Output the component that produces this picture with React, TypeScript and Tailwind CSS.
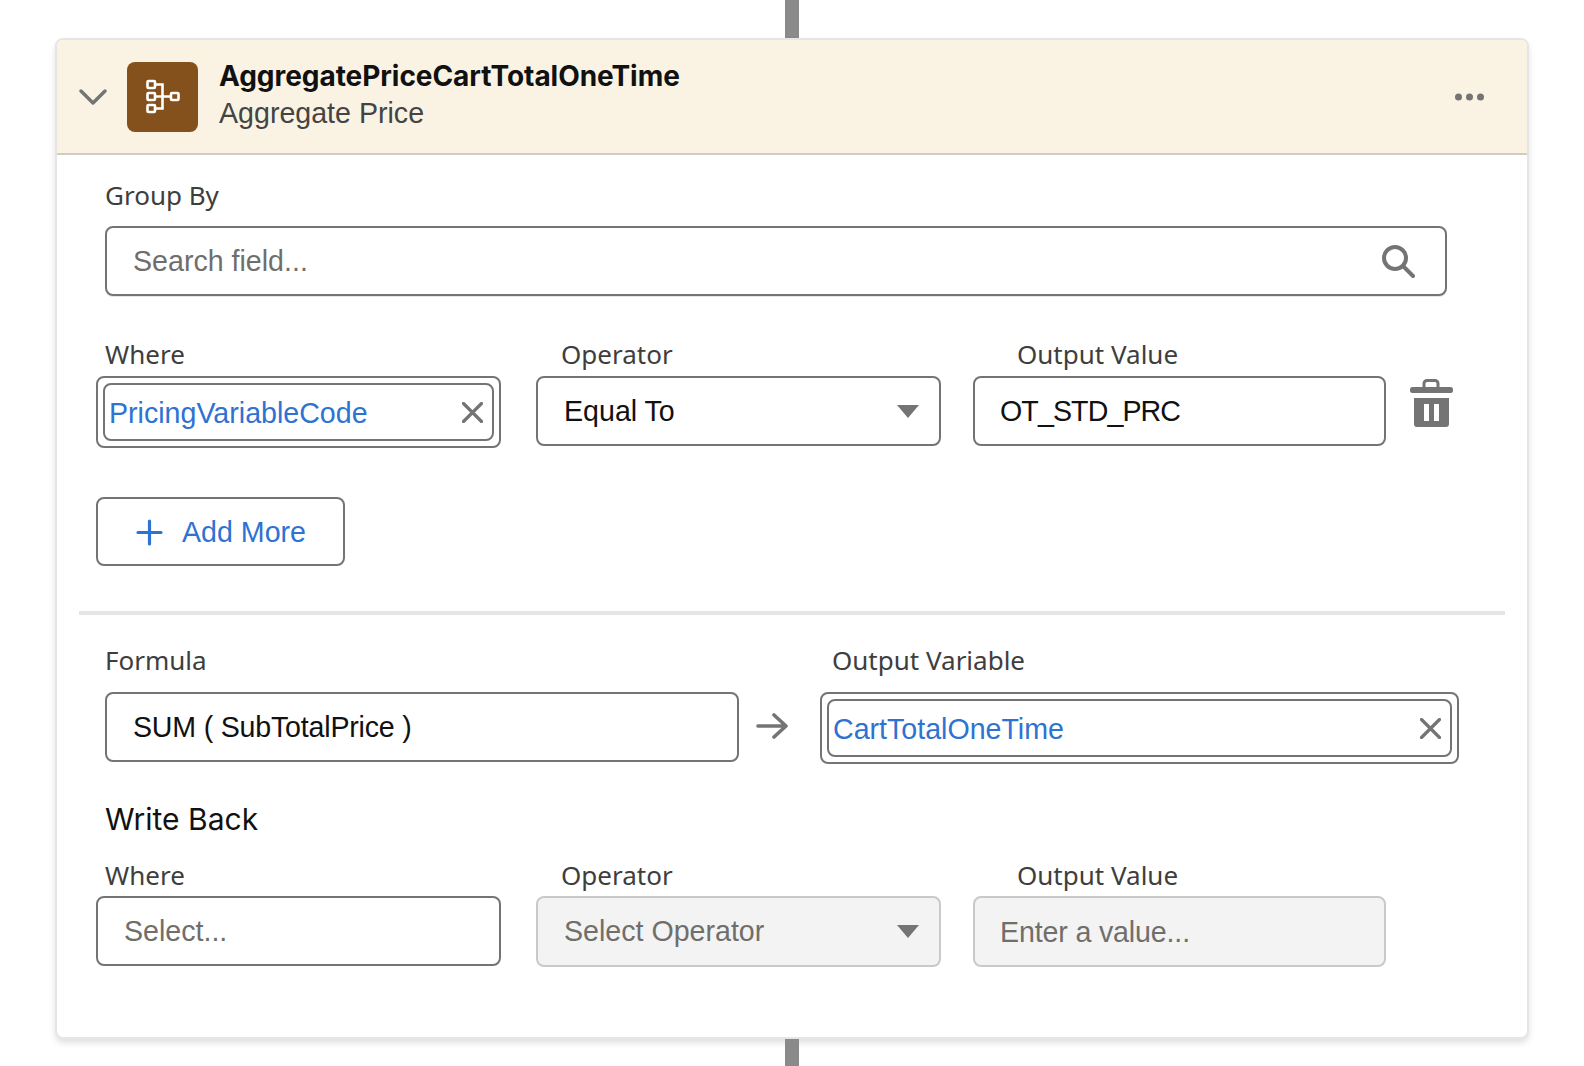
import type { ReactNode } from 'react';

const VALUE_FONT = "font-['Liberation_Sans',Arial,sans-serif] text-[28.6px]";
const FIELD_BASE = `flex h-[70px] items-center rounded-[8px] border-2 border-[#747474] bg-white ${VALUE_FONT}`;
const DISABLED_BASE = `flex h-[71px] items-center rounded-[8px] border-2 border-[#c9c9c9] bg-[#f3f3f3] text-[#706e6b] ${VALUE_FONT}`;

function Label({ children, className }: { children: ReactNode; className?: string }) {
  return (
    <div className={`h-[36px] font-['Noto_Sans',sans-serif] text-[26px] leading-[34px] text-[#3e3e3c] ${className ?? ''}`}>
      {children}
    </div>
  );
}

function Caret() {
  return (
    <svg width="22" height="13" viewBox="0 0 22 13" className="ml-auto mr-[12px] shrink-0">
      <path d="M0 0H22L11 13Z" fill="#747474" />
    </svg>
  );
}

function CloseIcon() {
  return (
    <svg width="21" height="21" viewBox="0 0 21 21" className="shrink-0">
      <path d="M1.5 1.5L19.5 19.5M19.5 1.5L1.5 19.5" stroke="#747474" strokeWidth="3.2" strokeLinecap="round" />
    </svg>
  );
}

function PillLookup({ value, className }: { value: string; className?: string }) {
  return (
    <div className={`h-[72px] rounded-[8px] border-2 border-[#747474] bg-white p-[5px] ${className ?? ''}`}>
      <div className={`flex h-full items-center rounded-[8px] border-2 border-[#747474] pl-[4px] pr-[9px] text-[#2e72d2] ${VALUE_FONT}`}>
        <span className="pt-[2px]">{value}</span>
        <span className="ml-auto flex">
          <CloseIcon />
        </span>
      </div>
    </div>
  );
}

export default function App() {
  return (
    <div className="min-h-[1066px] bg-white font-['Inter','Liberation_Sans',sans-serif]">
      <div className="ml-[785px] h-[38px] w-[14px] bg-[#8a8a8a]" />
      <div className="ml-[55px] w-[1474px] overflow-hidden rounded-[8px] border-2 border-[#e5e5e5] bg-white shadow-[0_4px_6px_rgba(0,0,0,0.12)]">
        <header className="flex h-[115px] items-center border-b-2 border-[#d0ccc4] bg-[#faf3e3]">
          <svg width="28" height="16" viewBox="0 0 28 16" className="ml-[22px] shrink-0">
            <path d="M2 2L14 14L26 2" fill="none" stroke="#747474" strokeWidth="3.4" strokeLinecap="round" strokeLinejoin="round" />
          </svg>
          <div className="ml-[20px] flex h-[70px] w-[71px] shrink-0 items-center justify-center rounded-[8px] bg-[#84501c]">
            <svg width="36" height="36" viewBox="0 0 36 36" fill="none" stroke="#ffffff" strokeWidth="2.6">
              <rect x="2.5" y="2" width="7.5" height="7" rx="1" />
              <rect x="2.5" y="14" width="7.5" height="7" rx="1" />
              <rect x="2.5" y="26" width="7.5" height="7" rx="1" />
              <rect x="26" y="14" width="7.5" height="7" rx="1" />
              <path d="M10 5.5H17.5V29.5H10M10 17.5H26" />
            </svg>
          </div>
          <div className="ml-[21px] -mt-[6px]">
            <div className="text-[28px] font-bold leading-[38px] tracking-[-0.05px] text-[#111111]">AggregatePriceCartTotalOneTime</div>
            <div className={`leading-[36px] text-[#444444] ${VALUE_FONT}`}>Aggregate Price</div>
          </div>
          <svg width="29" height="8" viewBox="0 0 29 8" className="ml-auto mr-[43px] shrink-0" fill="#747474">
            <circle cx="3.5" cy="4" r="3.5" />
            <circle cx="14.5" cy="4" r="3.5" />
            <circle cx="25.5" cy="4" r="3.5" />
          </svg>
        </header>

        <div className="pb-[70px] pl-[40px] pt-[23px]">
          <Label className="ml-[8px]">Group By</Label>
          <div className={`${FIELD_BASE} ml-[8px] mt-[12px] w-[1342px] pl-[26px] pr-[30px] text-[#706e6b] shadow-[0_1px_0_#e5e5e5]`}>
            <span>Search field...</span>
            <svg width="34" height="34" viewBox="0 0 34 34" className="ml-auto" fill="none" stroke="#747474" strokeWidth="4" strokeLinecap="round">
              <circle cx="14" cy="14" r="11" />
              <path d="M22 22L32 32" />
            </svg>
          </div>

          <div className="mt-[41px] flex">
            <div className="-ml-[1px] w-[405px]">
              <Label className="ml-[9px]">Where</Label>
              <PillLookup value="PricingVariableCode" className="mt-[3px]" />
            </div>
            <div className="ml-[35px] w-[405px]">
              <Label className="ml-[25px]">Operator</Label>
              <div className={`${FIELD_BASE} mt-[3px] pl-[26px] pr-[8px] text-[#111111]`}>
                <span className="pt-[1px]">Equal To</span>
                <Caret />
              </div>
            </div>
            <div className="ml-[32px] w-[413px]">
              <Label className="ml-[44px]">Output Value</Label>
              <div className={`${FIELD_BASE} mt-[3px] pl-[25px] text-[#111111]`}>
                <span className="pt-[1px] tracking-[-0.9px]">OT_STD_PRC</span>
              </div>
            </div>
            <svg width="43" height="49" viewBox="0 0 43 49" className="ml-[24px] mt-[42px] shrink-0">
              <path d="M14 8V4.5A3 3 0 0 1 17 1.5H25A3 3 0 0 1 28 4.5V8" fill="none" stroke="#747474" strokeWidth="3" />
              <rect x="0" y="8" width="43" height="6" rx="2.5" fill="#747474" />
              <path fillRule="evenodd" fill="#747474" d="M4 19H39V45A3 3 0 0 1 36 48H7A3 3 0 0 1 4 45ZM14 25V42H19V25ZM24 25V42H29V25Z" />
            </svg>
          </div>

          <div className={`-ml-[1px] mt-[49px] flex h-[69px] w-[249px] items-center rounded-[8px] border-2 border-[#747474] pl-[38px] text-[#2e72d2] ${VALUE_FONT}`}>
            <svg width="27" height="27" viewBox="0 0 27 27" className="mt-[2px] shrink-0" stroke="#2e72d2" strokeWidth="3.2" strokeLinecap="round">
              <path d="M13.5 2V25M2 13.5H25" />
            </svg>
            <span className="ml-[19px] pt-[2px]">Add More</span>
          </div>

          <div className="-ml-[18px] mt-[45px] h-[4px] w-[1426px] bg-[#e5e5e5]" />

          <div className="mt-[28px] flex">
            <div className="ml-[8px] w-[634px]">
              <Label>Formula</Label>
              <div className={`${FIELD_BASE} mt-[13px] pl-[26px] text-[#111111]`}>
                <span className="tracking-[-0.2px]">SUM ( SubTotalPrice )</span>
              </div>
            </div>
            <svg width="32" height="26" viewBox="0 0 32 26" className="ml-[17px] mt-[70px] shrink-0" fill="none" stroke="#747474" strokeWidth="3.6" strokeLinecap="round" strokeLinejoin="round">
              <path d="M2 13H29M18 2L30 13L18 24" />
            </svg>
            <div className="ml-[32px] w-[639px]">
              <Label className="ml-[12px]">Output Variable</Label>
              <PillLookup value="CartTotalOneTime" className="mt-[13px]" />
            </div>
          </div>

          <div className="ml-[8px] mt-[37px] h-[36px] text-[30px] leading-[36px] text-[#111111]">Write Back</div>

          <div className="mt-[21px] flex">
            <div className="-ml-[1px] w-[405px]">
              <Label className="ml-[9px]">Where</Label>
              <div className={`${FIELD_BASE} mt-[2px] pl-[26px] text-[#706e6b]`}>Select...</div>
            </div>
            <div className="ml-[35px] w-[405px]">
              <Label className="ml-[25px]">Operator</Label>
              <div className={`${DISABLED_BASE} mt-[2px] pl-[26px] pr-[8px]`}>
                <span>Select Operator</span>
                <Caret />
              </div>
            </div>
            <div className="ml-[32px] w-[413px]">
              <Label className="ml-[44px]">Output Value</Label>
              <div className={`${DISABLED_BASE} mt-[2px] pl-[25px]`}>
                <span className="pt-[1px] tracking-[-0.15px]">Enter a value...</span>
              </div>
            </div>
          </div>
        </div>
      </div>
      <div className="ml-[785px] h-[30px] w-[14px] bg-[#8a8a8a]" />
    </div>
  );
}
